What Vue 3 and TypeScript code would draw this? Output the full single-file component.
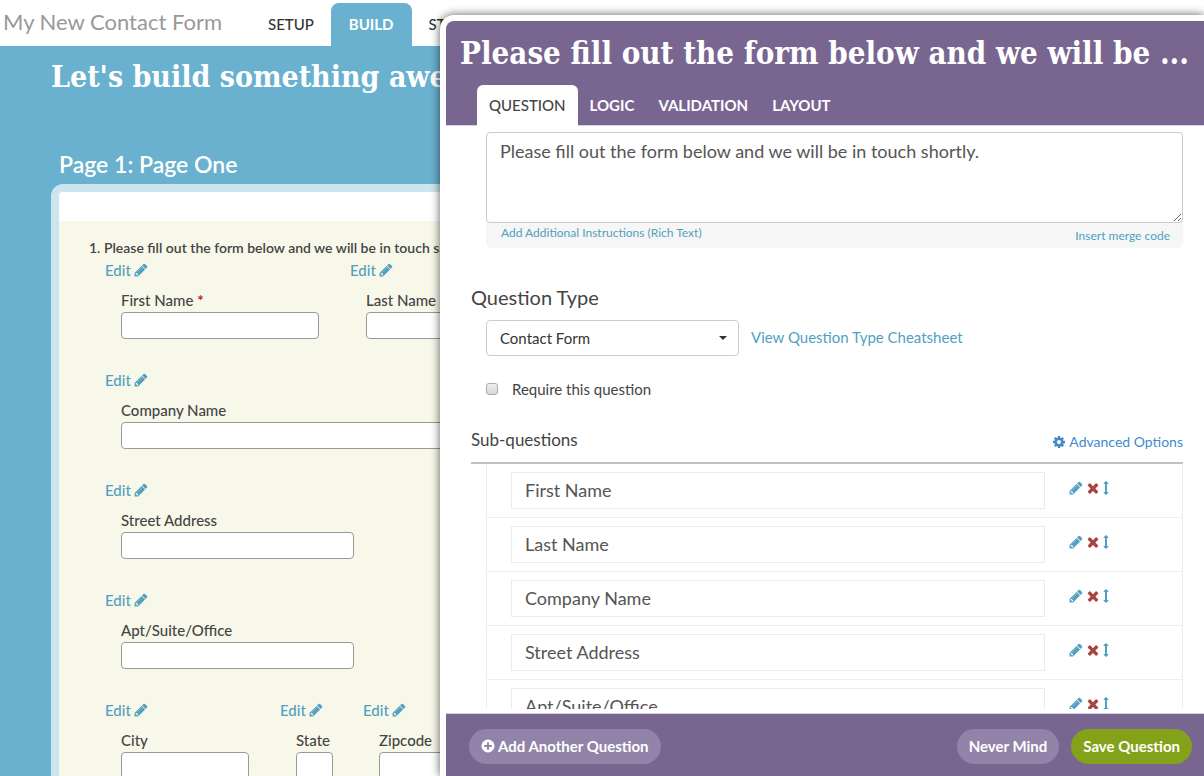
<script setup lang="ts">
import { ref } from 'vue'

interface Field {
  id: string
  label: string
  required?: boolean
  column: string
  input: string
}

const title = ref('My New Contact Form')
const instructions = ref('Please fill out the form below and we will be in touch shortly.')
const questionType = ref('Contact Form')
const required = ref(false)
const activeTab = ref('Question')

const steps = ['Setup', 'Build', 'Style']
const tabs = ['Question', 'Logic', 'Validation', 'Layout']

const rows: Field[][] = [
  [
    { id: 'first', label: 'First Name', required: true, column: 'col-half', input: 'in-name' },
    { id: 'last', label: 'Last Name', required: true, column: 'col-half', input: 'in-name' },
  ],
  [{ id: 'company', label: 'Company Name', column: 'col-full', input: 'in-full' }],
  [{ id: 'street', label: 'Street Address', column: 'col-full', input: 'in-street' }],
  [{ id: 'apt', label: 'Apt/Suite/Office', column: 'col-full', input: 'in-street' }],
  [
    { id: 'city', label: 'City', column: 'col-city', input: 'in-city' },
    { id: 'state', label: 'State', column: 'col-state', input: 'in-state' },
    { id: 'zip', label: 'Zipcode', column: 'col-half', input: 'in-city' },
  ],
]

const subQuestions = ref(['First Name', 'Last Name', 'Company Name', 'Street Address', 'Apt/Suite/Office'])

const pencil =
  'M491 1536l91-91-235-235-91 91v107h128v128h107zM960 416l416 416-832 832h-416v-416zm683 96q0 53-37 90l-166 166-416-416 166-165q36-38 90-38 53 0 91 38l235 234q37 39 37 91z'
const pencilShine =
  'M1014 608q0-22-22-22-10 0-17 7l-542 542q-7 7-7 17 0 22 22 22 10 0 17-7l542-542q7-7 7-17z'
const cross =
  'M1490 1322q0 40-28 68l-136 136q-28 28-68 28t-68-28l-294-294-294 294q-28 28-68 28t-68-28l-136-136q-28-28-28-68t28-68l294-294-294-294q-28-28-28-68t28-68l136-136q28-28 68-28t68 28l294 294 294-294q28-28 68-28t68 28l136 136q28 28 28 68t-28 68l-294 294 294 294q28 28 28 68z'
const arrows =
  'M1216 320q0 26-19 45t-45 19h-128v1024h128q26 0 45 19t19 45-19 45l-256 256q-19 19-45 19t-45-19l-256-256q-19-19-19-45t19-45 45-19h128v-1024h-128q-26 0-45-19t-19-45 19-45l256-256q19-19 45-19t45 19l256 256q19 19 19 45z'
const cog =
  'M1152 896q0-106-75-181t-181-75-181 75-75 181 75 181 181 75 181-75 75-181zm512-109v222q0 12-8 23t-20 13l-185 28q-19 54-39 91 35 50 107 138 10 12 10 25t-9 23q-27 37-99 108t-94 71q-12 0-26-9l-138-108q-44 23-91 38-16 136-29 186-7 28-36 28h-222q-14 0-24.5-8.5t-11.5-21.5l-28-184q-49-16-90-37l-141 107q-10 9-25 9-14 0-25-11-126-114-165-168-7-10-7-23 0-12 8-23 15-21 51-66.5t54-70.5q-27-50-41-99l-183-27q-13-2-21-12.5t-8-23.5v-222q0-12 8-23t19-13l186-28q14-46 39-92-40-57-107-138-10-12-10-24 0-10 9-23 26-36 98.5-107.5t94.5-71.5q13 0 26 10l138 107q44-23 91-38 16-136 29-186 7-28 36-28h222q14 0 24.5 8.5t11.5 21.5l28 184q49 16 90 37l142-107q9-9 24-9 13 0 25 10 129 119 165 170 7 8 7 22 0 12-8 23-15 21-51 66.5t-54 70.5q26 50 41 98l183 28q13 2 21 12.5t8 23.5z'
const plusCircle =
  'M1344 960v-128q0-26-19-45t-45-19h-256v-256q0-26-19-45t-45-19h-128q-26 0-45 19t-19 45v256h-256q-26 0-45 19t-19 45v128q0 26 19 45t45 19h256v256q0 26 19 45t45 19h128q26 0 45-19t19-45v-256h256q26 0 45-19t19-45zm320-64q0 209-103 385.5t-279.5 279.5-385.5 103-385.5-103-279.5-279.5-103-385.5 103-385.5 279.5-279.5 385.5-103 385.5 103 279.5 279.5 103 385.5z'
</script>

<template>
  <div class="app">
    <header class="topbar">
      <h1 class="form-title">{{ title }}</h1>
      <nav class="steps">
        <a v-for="step in steps" :key="step" href="#" class="step" :class="{ current: step === 'Build' }">{{ step }}</a>
      </nav>
    </header>

    <main class="builder">
      <h2 class="headline">Let's build something awesome!</h2>
      <h3 class="page-name">Page 1: Page One</h3>
      <section class="sheet">
        <div class="question">
          <p class="question-title">1. Please fill out the form below and we will be in touch shortly.</p>
          <div v-for="(row, i) in rows" :key="i" class="field-row">
            <div v-for="field in row" :key="field.id" class="field" :class="field.column">
              <a href="#" class="edit">Edit <svg class="icon" viewBox="64 64 1664 1664" aria-hidden="true"><path :d="pencil" /><path class="shine" :d="pencilShine" /></svg></a>
              <label :for="field.id" class="field-label">{{ field.label }} <span v-if="field.required" class="star">*</span></label>
              <input :id="field.id" type="text" class="field-input" :class="field.input" />
            </div>
          </div>
        </div>
      </section>
    </main>

    <section class="modal" role="dialog" aria-labelledby="dialog-title">
      <header class="modal-head">
        <h2 id="dialog-title" class="modal-title">{{ 'Please fill out the form below and we will be ...' }}</h2>
        <nav class="tabs">
          <button v-for="tab in tabs" :key="tab" type="button" class="tab" :class="{ active: tab === activeTab }" @click="activeTab = tab">{{ tab }}</button>
        </nav>
      </header>

      <div class="modal-body">
        <div class="instructions">
          <textarea v-model="instructions" class="instructions-text" aria-label="Question text"></textarea>
          <div class="instructions-links">
            <a href="#">Add Additional Instructions (Rich Text)</a>
            <a href="#" class="merge">Insert merge code</a>
          </div>
        </div>

        <label for="question-type" class="type-label">Question Type</label>
        <div class="type-row">
          <div class="select-wrap">
            <select id="question-type" v-model="questionType" class="type-select">
              <option>Contact Form</option>
            </select>
            <svg class="caret" viewBox="0 0 8 4" aria-hidden="true"><path d="M0 0h8L4 4z" /></svg>
          </div>
          <a href="#" class="cheatsheet">View Question Type Cheatsheet</a>
        </div>

        <label class="require"><input v-model="required" type="checkbox" class="check" />Require this question</label>

        <div class="sub-head">
          <h3 class="sub-title">Sub-questions</h3>
          <a href="#" class="advanced"><svg class="icon" viewBox="0 0 1792 1792" aria-hidden="true"><path :d="cog" /></svg>Advanced Options</a>
        </div>
        <ul class="sub-list">
          <li v-for="(_, i) in subQuestions" :key="i" class="sub-item">
            <input v-model="subQuestions[i]" type="text" class="sub-input" :aria-label="'Sub-question ' + (i + 1)" />
            <div class="actions">
              <button type="button" class="action" aria-label="Edit"><svg class="icon" viewBox="64 64 1664 1664"><path :d="pencil" /><path class="shine" :d="pencilShine" /></svg></button>
              <button type="button" class="action remove" aria-label="Remove"><svg class="icon" viewBox="96 96 1600 1600"><path :d="cross" /></svg></button>
              <button type="button" class="action move" aria-label="Move"><svg class="icon" viewBox="512 0 768 1792"><path :d="arrows" /></svg></button>
            </div>
          </li>
        </ul>
      </div>

      <footer class="modal-foot">
        <button type="button" class="pill add"><svg class="icon" viewBox="64 64 1664 1664" aria-hidden="true"><path :d="plusCircle" /></svg>Add Another Question</button>
        <button type="button" class="pill">Never Mind</button>
        <button type="button" class="pill save">Save Question</button>
      </footer>
    </section>
  </div>
</template>

<style>
body {
  margin: 0;
}
</style>

<style scoped>
.app {
  position: relative;
  display: flex;
  flex-direction: column;
  height: 100vh;
  overflow: hidden;
  background: #69b1cf;
  color: #444;
  font-family: Lato, "Liberation Sans", sans-serif;
  font-size: 15px;
  line-height: 20px;
}
.app * {
  box-sizing: border-box;
}
h1, h2, h3, p, ul {
  margin: 0;
  padding: 0;
}
button, input, textarea, select {
  margin: 0;
  font: inherit;
  color: inherit;
}
button {
  border: 0;
  padding: 0;
  background: none;
}
a {
  color: #529fbf;
  text-decoration: none;
}
.icon {
  width: 14px;
  height: 14px;
  fill: currentColor;
  flex: none;
}
.shine {
  fill: #fff;
  fill-opacity: 0.6;
}

.topbar {
  display: flex;
  flex: none;
  align-items: flex-end;
  height: 46px;
  padding-left: 3px;
  background: #fff;
}
.form-title {
  width: 248px;
  padding-bottom: 9px;
  color: #999;
  font-size: 22px;
  font-weight: 400;
  line-height: 30px;
  white-space: nowrap;
}
.steps {
  display: flex;
}
.step {
  height: 43px;
  padding: 0 17px;
  border-radius: 8px 8px 0 0;
  color: #333;
  font-weight: 500;
  line-height: 43px;
  text-transform: uppercase;
}
.current {
  padding: 0 18px;
  background: #69b1cf;
  color: #fff;
  font-weight: 700;
}

.builder {
  padding-left: 51px;
}
.headline {
  padding-top: 12px;
  color: #fff;
  font-family: "DejaVu Serif Condensed", "DejaVu Serif", serif;
  font-size: 30px;
  line-height: 38px;
  white-space: nowrap;
}
.page-name {
  padding: 52px 0 4px 8px;
  color: #fff;
  font-size: 23px;
  font-weight: 600;
  line-height: 32px;
}
.sheet {
  margin-right: 51px;
  padding-top: 29px;
  border: 8px solid #cde5ef;
  border-radius: 12px;
  background: #fff;
}
.question {
  padding: 17px 30px;
  background: #f7f8ea;
}
.question-title {
  font-size: 14px;
  font-weight: 600;
  white-space: nowrap;
}
.field-row {
  display: flex;
  padding: 2px 0 29px 16px;
}
.field {
  display: flex;
  flex-direction: column;
  align-items: flex-start;
}
.col-half {
  width: 245px;
}
.col-full {
  width: 100%;
}
.col-city {
  width: 175px;
}
.col-state {
  width: 83px;
}
.edit {
  display: flex;
  align-items: center;
  gap: 3px;
  font-weight: 500;
}
.field-label {
  padding: 10px 0 2px 16px;
  font-weight: 500;
}
.star {
  color: #b11f2a;
  font-weight: 700;
}
.field-input {
  height: 27px;
  margin-left: 16px;
  border: 1px solid #999;
  border-radius: 4px;
  background: #fff;
}
.in-name {
  width: 198px;
}
.in-full {
  width: 60%;
}
.in-street {
  width: 233px;
}
.in-city {
  width: 128px;
}
.in-state {
  width: 37px;
}

.modal {
  position: absolute;
  inset: 15px 0 0 440px;
  display: flex;
  flex-direction: column;
  padding: 6px 0 0 6px;
  border-radius: 14px 0 0 0;
  background: #fff;
  box-shadow: 0 0 10px rgba(0, 0, 0, 0.65);
}
.modal-head {
  flex: none;
  padding: 12px 14px 0;
  border-radius: 8px 0 0 0;
  border-bottom: 1px solid #d6d1de;
  background: #786691;
}
.modal-title {
  color: #fff;
  font-family: "DejaVu Serif Condensed", "DejaVu Serif", serif;
  font-size: 31px;
  line-height: 40px;
  white-space: nowrap;
}
.tabs {
  display: flex;
  margin-bottom: -1px;
  padding: 12px 0 0 17px;
}
.tab {
  height: 41px;
  padding: 0 12px 2px;
  border-radius: 6px 6px 0 0;
  color: #fff;
  font-weight: 700;
  text-transform: uppercase;
}
.active {
  background: #fff;
  color: #444;
  font-weight: 500;
}

.modal-body {
  flex: 1;
  min-height: 0;
  margin-bottom: 4px;
  padding: 6px 21px 0 25px;
  overflow: hidden;
}
.instructions {
  margin-left: 15px;
  border-radius: 6px;
  background: #f6f6f6;
}
.instructions-text {
  display: block;
  width: 100%;
  height: 91px;
  padding: 8px 13px;
  border: 1px solid #ccc;
  border-radius: 4px;
  background: #fff;
  color: #555;
  font-size: 18px;
  line-height: 20px;
  resize: vertical;
}
.instructions-links {
  display: flex;
  justify-content: space-between;
  height: 25px;
  padding: 0 13px 0 15px;
  font-size: 12px;
  line-height: 20px;
}
.merge {
  padding-top: 3px;
}
.type-label {
  display: block;
  padding: 35px 0 9px;
  font-size: 20px;
  line-height: 28px;
}
.type-row {
  display: flex;
  align-items: center;
  gap: 12px;
  padding-left: 15px;
}
.select-wrap {
  position: relative;
  width: 253px;
}
.type-select {
  display: block;
  width: 100%;
  height: 36px;
  padding: 0 13px;
  appearance: none;
  border: 1px solid #ccc;
  border-radius: 4px;
  background: #fff;
  color: #333;
}
.caret {
  position: absolute;
  top: 16px;
  right: 12px;
  width: 8px;
  height: 4px;
  fill: #333;
}
.cheatsheet {
  padding-bottom: 2px;
}
.require {
  display: flex;
  align-items: center;
  gap: 14px;
  padding: 23px 0 0 15px;
}
.check {
  width: 12px;
  height: 12px;
  appearance: none;
  border: 1px solid #aaa;
  border-radius: 3px;
  background: linear-gradient(#eee, #d8d8d8);
}
.sub-head {
  display: flex;
  align-items: flex-end;
  justify-content: space-between;
  margin-top: 29px;
  padding-bottom: 10px;
  border-bottom: 2px solid #c1c1c1;
}
.sub-title {
  font-size: 17px;
  font-weight: 400;
  line-height: 24px;
}
.advanced {
  display: flex;
  align-items: center;
  gap: 3px;
  color: #428bca;
  font-size: 14px;
}
.sub-list {
  margin-left: 15px;
  border: 1px solid #eee;
  border-width: 0 1px;
  list-style: none;
}
.sub-item {
  display: flex;
  padding: 8px 0 8px 24px;
  border-bottom: 1px solid #eee;
}
.sub-input {
  flex: 1;
  min-width: 0;
  height: 37px;
  padding: 0 13px 2px;
  border: 1px solid #eaeaea;
  color: #555;
  font-size: 18px;
}
.actions {
  display: flex;
  align-items: flex-start;
  width: 137px;
  padding: 9px 0 0 24px;
}
.action {
  display: flex;
  width: 17px;
  color: #529fbf;
}
.remove {
  color: #a94442;
}
.move .icon {
  width: 6px;
}

.modal-foot {
  display: flex;
  flex: none;
  align-items: center;
  gap: 12px;
  padding: 15px 12px 12px 23px;
  border-top: 1px solid #d6d1de;
  background: #786691;
}
.pill {
  display: flex;
  align-items: center;
  gap: 3px;
  height: 35px;
  padding: 0 12px 2px;
  border-radius: 18px;
  background: #9184a8;
  color: #fff;
  font-weight: 700;
  white-space: nowrap;
}
.add {
  margin-right: auto;
}
.save {
  background: #84a11a;
}
</style>
